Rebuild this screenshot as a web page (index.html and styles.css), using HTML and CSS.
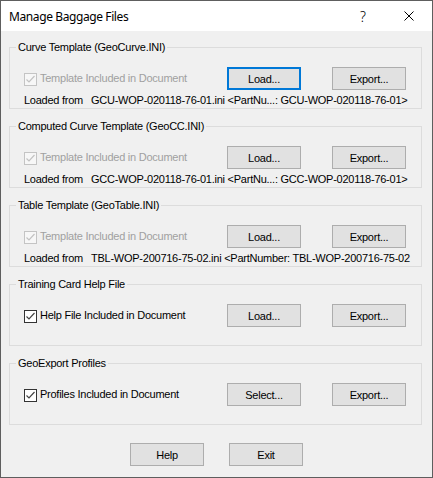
FILE: index.html
```html
<!DOCTYPE html>
<html>
<head>
<meta charset="utf-8">
<link rel="stylesheet" href="styles.css">
</head>
<body>
<div class="window">
  <div class="titlebar">
    <span class="title">Manage Baggage Files</span>
    <div class="caption">
      <span class="cap-btn help-q">?</span>
      <span class="cap-btn"><svg width="10" height="10" viewBox="0 0 10 10"><path d="M0.5 0.5 L9.5 9.5 M9.5 0.5 L0.5 9.5" stroke="#000" stroke-width="1" fill="none"/></svg></span>
    </div>
  </div>
  <div class="content">
    <div class="group">
      <span class="legend">Curve Template (GeoCurve.INI)</span>
      <div class="row">
        <span class="check disabled"><svg width="11" height="11" viewBox="0 0 11 11"><path d="M1.5 5.5 L4 8 L9.5 2" stroke="#c2c2c2" stroke-width="1.2" fill="none"/></svg></span>
        <span class="label disabled-text">Template Included in Document</span>
        <div class="buttons">
          <span class="btn focus">Load...</span>
          <span class="btn">Export...</span>
        </div>
      </div>
      <div class="loaded"><span class="lf">Loaded from</span><span class="val">GCU-WOP-020118-76-01.ini &lt;PartNu...: GCU-WOP-020118-76-01&gt;</span></div>
    </div>
    <div class="group">
      <span class="legend">Computed Curve Template (GeoCC.INI)</span>
      <div class="row">
        <span class="check disabled"><svg width="11" height="11" viewBox="0 0 11 11"><path d="M1.5 5.5 L4 8 L9.5 2" stroke="#c2c2c2" stroke-width="1.2" fill="none"/></svg></span>
        <span class="label disabled-text">Template Included in Document</span>
        <div class="buttons">
          <span class="btn">Load...</span>
          <span class="btn">Export...</span>
        </div>
      </div>
      <div class="loaded"><span class="lf">Loaded from</span><span class="val">GCC-WOP-020118-76-01.ini &lt;PartNu...: GCC-WOP-020118-76-01&gt;</span></div>
    </div>
    <div class="group">
      <span class="legend">Table Template (GeoTable.INI)</span>
      <div class="row">
        <span class="check disabled"><svg width="11" height="11" viewBox="0 0 11 11"><path d="M1.5 5.5 L4 8 L9.5 2" stroke="#c2c2c2" stroke-width="1.2" fill="none"/></svg></span>
        <span class="label disabled-text">Template Included in Document</span>
        <div class="buttons">
          <span class="btn">Load...</span>
          <span class="btn">Export...</span>
        </div>
      </div>
      <div class="loaded"><span class="lf">Loaded from</span><span class="val">TBL-WOP-200716-75-02.ini &lt;PartNumber: TBL-WOP-200716-75-02</span></div>
    </div>
    <div class="group">
      <span class="legend">Training Card Help File</span>
      <div class="row">
        <span class="check"><svg width="11" height="11" viewBox="0 0 11 11"><path d="M1.5 5.5 L4 8 L9.5 2" stroke="#444" stroke-width="1.2" fill="none"/></svg></span>
        <span class="label">Help File Included in Document</span>
        <div class="buttons">
          <span class="btn">Load...</span>
          <span class="btn">Export...</span>
        </div>
      </div>
    </div>
    <div class="group">
      <span class="legend">GeoExport Profiles</span>
      <div class="row">
        <span class="check"><svg width="11" height="11" viewBox="0 0 11 11"><path d="M1.5 5.5 L4 8 L9.5 2" stroke="#444" stroke-width="1.2" fill="none"/></svg></span>
        <span class="label">Profiles Included in Document</span>
        <div class="buttons">
          <span class="btn">Select...</span>
          <span class="btn">Export...</span>
        </div>
      </div>
    </div>
  </div>
  <div class="footer">
    <span class="btn">Help</span>
    <span class="btn">Exit</span>
  </div>
</div>
</body>
</html>
```
FILE: styles.css
```css
html, body {
  margin: 0;
  padding: 0;
  background: #4a4a4a;
}
.window {
  width: 433px;
  height: 478px;
  box-sizing: border-box;
  border: 1px solid #5e5e5e;
  background: #f0f0f0;
  display: flex;
  flex-direction: column;
  font-family: "Liberation Sans", Arial, sans-serif;
  font-size: 11px;
  letter-spacing: -0.25px;
  color: #000;
}
.titlebar {
  height: 30px;
  flex: none;
  background: #fff;
  display: flex;
  align-items: center;
  padding-left: 8px;
}
.title {
  font-family: "Noto Sans", sans-serif;
  font-size: 12px;
  letter-spacing: -0.4px;
  color: #000;
}
.caption {
  margin-left: auto;
  display: flex;
  height: 30px;
}
.cap-btn {
  width: 46px;
  height: 30px;
  display: flex;
  align-items: center;
  justify-content: center;
}
.help-q {
  font-family: "Noto Sans", sans-serif;
  font-size: 14px;
  font-weight: 300;
  letter-spacing: 0;
}
.content {
  padding: 16px 10px 0 8px;
  display: flex;
  flex-direction: column;
  gap: 17px;
}
.group {
  position: relative;
  height: 62px;
  box-sizing: border-box;
  border: 1px solid #dcdcdc;
  padding: 19px 15px 0 14px;
}
.legend {
  position: absolute;
  top: -7px;
  left: 6px;
  padding: 0 2px;
  line-height: 13px;
  background: #f0f0f0;
  white-space: nowrap;
}
.row {
  display: flex;
  align-items: center;
  height: 23px;
}
.check {
  width: 13px;
  height: 13px;
  box-sizing: border-box;
  border: 1px solid #333;
  background: #fff;
  display: flex;
  align-items: center;
  justify-content: center;
  flex: none;
  margin-top: 1px;
}
.check.disabled {
  border-color: #c4c4c4;
  background: #f7f7f7;
}
.label {
  margin-left: 3px;
  white-space: nowrap;
  line-height: 13px;
}
.disabled-text {
  color: #a0a0a0;
}
.buttons {
  margin-left: auto;
  display: flex;
  gap: 31px;
}
.btn {
  width: 74px;
  height: 23px;
  box-sizing: border-box;
  border: 1px solid #adadad;
  background: #e1e1e1;
  display: flex;
  align-items: center;
  justify-content: center;
  white-space: nowrap;
}
.btn.focus {
  border: 2px solid #0078d7;
}
.loaded {
  margin-top: 4px;
  margin-right: -8px;
  line-height: 13px;
  white-space: nowrap;
  overflow: hidden;
  display: flex;
}
.lf {
  width: 67px;
  flex: none;
}
.val {
  white-space: nowrap;
}
.footer {
  padding-top: 18px;
  display: flex;
  justify-content: center;
  gap: 25px;
}
```
